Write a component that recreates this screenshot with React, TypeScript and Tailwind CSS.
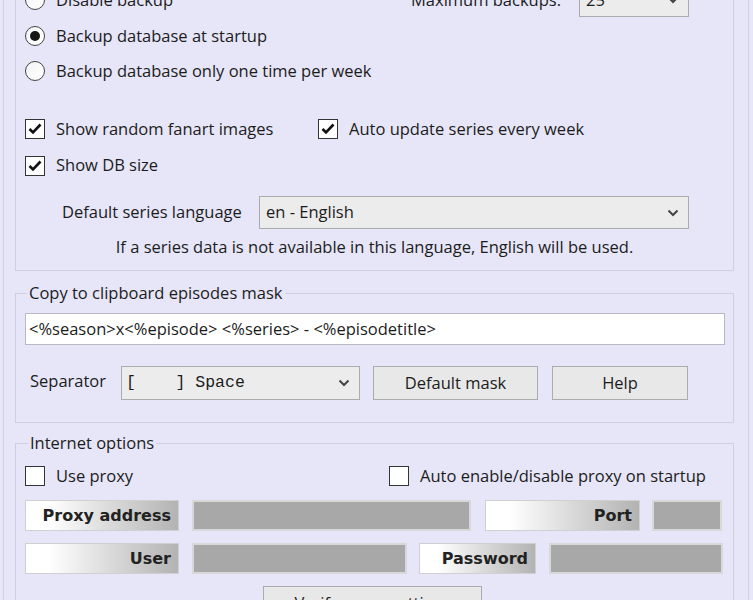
import React from 'react';

function Chevron() {
  return (
    <svg width="12" height="8" viewBox="0 0 12 8" className="shrink-0">
      <path d="M1.5 1.5 L6 6 L10.5 1.5" fill="none" stroke="#444" strokeWidth="2" />
    </svg>
  );
}

function Radio({ checked, label }: { checked?: boolean; label: string }) {
  return (
    <div className="flex items-center gap-[11px]">
      <span className="w-[20px] h-[20px] rounded-full border border-[#444] bg-gradient-to-br from-[#f4f4f4] to-white flex items-center justify-center shrink-0">
        {checked && <span className="w-[10px] h-[10px] rounded-full bg-[#161616]" />}
      </span>
      <span>{label}</span>
    </div>
  );
}

function Check({ checked, label }: { checked?: boolean; label: string }) {
  return (
    <div className="flex items-center gap-[11px]">
      <span className="w-[20px] h-[20px] border border-[#333] bg-white flex items-center justify-center shrink-0">
        {checked && (
          <svg width="14" height="12" viewBox="0 0 14 12">
            <path d="M1.5 6 L5 9.5 L12.5 1.5" fill="none" stroke="#111" strokeWidth="2.6" />
          </svg>
        )}
      </span>
      <span>{label}</span>
    </div>
  );
}

function Select({ value, className, mono }: { value: string; className: string; mono?: boolean }) {
  return (
    <div className={`flex items-center justify-between border border-[#acacac] bg-[#ececec] pr-[9px] ${mono ? 'pl-[4px]' : 'pl-[6px]'} ${className}`}>
      <span className={mono ? "font-['Liberation_Mono',monospace] text-[16.5px] whitespace-pre" : ''}>{value}</span>
      <Chevron />
    </div>
  );
}

function Label({ text, className }: { text: string; className: string }) {
  return (
    <div className={`flex items-center justify-end pr-[7px] border border-[#d0d0d0] bg-gradient-to-r from-white from-15% to-[#b3b3b3] font-['DejaVu_Sans',sans-serif] font-bold text-[16px] text-[#222] ${className}`}>
      {text}
    </div>
  );
}

function GrayField({ className }: { className: string }) {
  return <div className={`border-2 border-[#d8d8d8] bg-[#a8a8a8] ${className}`} />;
}

export default function App() {
  return (
    <div className="w-[753px] h-[600px] overflow-hidden bg-[#e6e6f8] text-[16.5px] text-[#1c1c1c] font-['Open_Sans',sans-serif]">
      <div className="ml-[3px] w-[746px] min-h-[640px] border-l border-r border-[#d2d2e2] pl-[11px]">
        {/* Options group (top cut off) */}
        <div className="-mt-[19px] w-[719px] border border-[#cfcfe0] pl-[9px] pb-[5px]">
          <div className="h-[36px] flex items-center">
            <div className="w-[350px]"><Radio label="Disable backup" /></div>
            <span className="w-[204px] pr-[18px] text-right">Maximum backups:</span>
            <Select value="25" className="w-[110px] h-[33px]" />
          </div>
          <div className="h-[36px] flex items-center"><Radio checked label="Backup database at startup" /></div>
          <div className="h-[34px] flex items-center"><Radio label="Backup database only one time per week" /></div>
          <div className="h-[23px]" />
          <div className="h-[36px] flex items-center">
            <div className="w-[293px]"><Check checked label="Show random fanart images" /></div>
            <Check checked label="Auto update series every week" />
          </div>
          <div className="h-[37px] flex items-center"><Check checked label="Show DB size" /></div>
          <div className="h-[12px]" />
          <div className="h-[33px] flex items-center">
            <span className="ml-[37px] w-[197px]">Default series language</span>
            <Select value="en - English" className="w-[430px] h-[33px]" />
          </div>
          <div className="h-[36px] flex items-center justify-center pr-[9px]">
            If a series data is not available in this language, English will be used.
          </div>
        </div>

        {/* Copy to clipboard */}
        <div className="mt-[22px] w-[719px] h-[130px] border border-[#cfcfe0] px-[9px] relative">
          <div className="absolute -top-[13px] left-[11px] px-[2px] bg-[#e6e6f8] leading-[24px]">Copy to clipboard episodes mask</div>
          <div className="mt-[19px] h-[32px] w-[700px] border border-[#b9b9c4] bg-white flex items-center pl-[3px]">
            {'<%season>x<%episode> <%series> - <%episodetitle>'}
          </div>
          <div className="mt-[21px] flex items-center">
            <span className="ml-[5px] w-[91px] -mt-[3px]">Separator</span>
            <Select value="[    ] Space" mono className="w-[239px] h-[34px]" />
            <button className="ml-[13px] w-[165px] h-[34px] border border-[#acacac] bg-[#e8e8e8]">Default mask</button>
            <button className="ml-[14px] w-[136px] h-[34px] border border-[#acacac] bg-[#e8e8e8]">Help</button>
          </div>
        </div>

        {/* Internet options */}
        <div className="mt-[20px] w-[719px] h-[230px] border border-[#cfcfe0] px-[9px] relative">
          <div className="absolute -top-[13px] left-[12px] px-[2px] bg-[#e6e6f8] leading-[24px]">Internet options</div>
          <div className="mt-[21px] h-[22px] flex items-center">
            <div className="w-[364px]"><Check label="Use proxy" /></div>
            <Check label="Auto enable/disable proxy on startup" />
          </div>
          <div className="mt-[13px] h-[31px] flex">
            <Label text="Proxy address" className="w-[154px]" />
            <GrayField className="ml-[13px] w-[279px]" />
            <Label text="Port" className="ml-[14px] w-[155px]" />
            <GrayField className="ml-[12px] w-[70px]" />
          </div>
          <div className="mt-[12px] h-[31px] flex">
            <Label text="User" className="w-[154px]" />
            <GrayField className="ml-[13px] w-[215px]" />
            <Label text="Password" className="ml-[12px] w-[117px]" />
            <GrayField className="ml-[13px] w-[174px]" />
          </div>
          <div className="mt-[12px] flex">
            <button className="ml-[238px] w-[219px] h-[34px] border border-[#acacac] bg-[#e8e8e8]">Verify proxy settings</button>
          </div>
        </div>
      </div>
    </div>
  );
}
